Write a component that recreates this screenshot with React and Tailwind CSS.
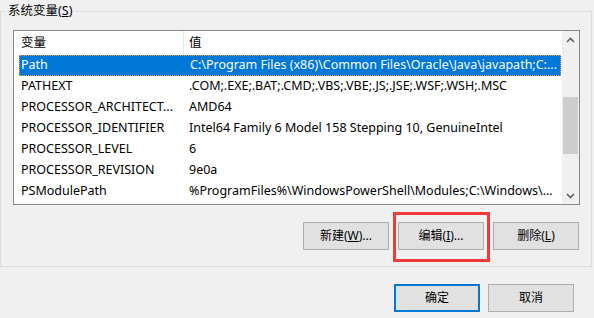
const rows = [
  ['Path', 'C:\\Program Files (x86)\\Common Files\\Oracle\\Java\\javapath;C:...'],
  ['PATHEXT', '.COM;.EXE;.BAT;.CMD;.VBS;.VBE;.JS;.JSE;.WSF;.WSH;.MSC'],
  ['PROCESSOR_ARCHITECT...', 'AMD64'],
  ['PROCESSOR_IDENTIFIER', 'Intel64 Family 6 Model 158 Stepping 10, GenuineIntel'],
  ['PROCESSOR_LEVEL', '6'],
  ['PROCESSOR_REVISION', '9e0a'],
  ['PSModulePath', '%ProgramFiles%\\WindowsPowerShell\\Modules;C:\\Windows\\...'],
];

function Chevron({ down }) {
  return (
    <svg width="9" height="6" viewBox="0 0 9 6" className={down ? 'rotate-180' : ''}>
      <path d="M1 5 L4.5 1.5 L8 5" fill="none" stroke="#606060" strokeWidth="1.6" />
    </svg>
  );
}

function Button({ children, primary, highlight }) {
  return (
    <button
      className={
        'relative w-[86px] h-[28px] bg-[#e1e1e1] text-[12px] text-black flex items-center justify-center ' +
        (primary ? 'border-2 border-[#0078d7]' : 'border border-[#adadad]')
      }
    >
      {children}
      {highlight && (
        <span className="absolute left-[-6px] top-[-11px] w-[97px] h-[50px] border-[3px] border-[#f03a3a] pointer-events-none" />
      )}
    </button>
  );
}

export default function App() {
  return (
    <div
      className="w-[594px] h-[318px] bg-[#f0f0f0] overflow-hidden text-[12.5px] text-black"
      style={{ fontFamily: '"Noto Sans", "Noto Sans CJK SC", sans-serif' }}
    >
      <fieldset className="mt-[3px] w-[592px] h-[264px] border border-[#dcdcdc] px-0">
        <legend className="ml-[4px] px-[3px] leading-[16px]">系统变量(<span className="underline">S</span>)</legend>
        <div className="ml-[12px] mt-[11px] w-[567px] h-[175px] border border-[#828790] bg-white flex">
          <div className="flex-1 flex flex-col">
            <div className="h-[24px] flex items-center">
              <div className="w-[169px] pl-[7px]">变量</div>
              <div className="w-px h-full bg-[#e5e5e5]" />
              <div className="pl-[5px]">值</div>
            </div>
            {rows.map(([name, value], i) => (
              <div
                key={name}
                className={
                  'h-[21px] ml-[5px] mr-[1px] flex items-center whitespace-nowrap overflow-hidden ' +
                  (i === 0 ? 'bg-[#0078d7] text-white border border-dotted border-[#f0a030]' : '')
                }
              >
                <div className={'w-[168px] shrink-0 ' + (i === 0 ? 'pl-[1px]' : 'pl-[2px]')}>{name}</div>
                <div className="pl-[2px]">{value}</div>
              </div>
            ))}
          </div>
          <div className="w-[17px] bg-[#f0f0f0] flex flex-col items-center">
            <div className="h-[17px] flex items-center justify-center">
              <Chevron />
            </div>
            <div className="flex-1 w-full px-[1px] pt-[49px]">
              <div className="h-[57px] bg-[#cdcdcd]" />
            </div>
            <div className="h-[17px] flex items-center justify-center">
              <Chevron down />
            </div>
          </div>
        </div>
        <div className="mt-[17px] mr-[12px] flex justify-end gap-[9px]">
          <Button>新建(<span className="underline">W</span>)...</Button>
          <Button highlight>编辑(<span className="underline">I</span>)...</Button>
          <Button>删除(<span className="underline">L</span>)</Button>
        </div>
      </fieldset>
      <div className="mt-[17px] mr-[20px] flex justify-end gap-[8px]">
        <Button primary>确定</Button>
        <Button>取消</Button>
      </div>
    </div>
  );
}
